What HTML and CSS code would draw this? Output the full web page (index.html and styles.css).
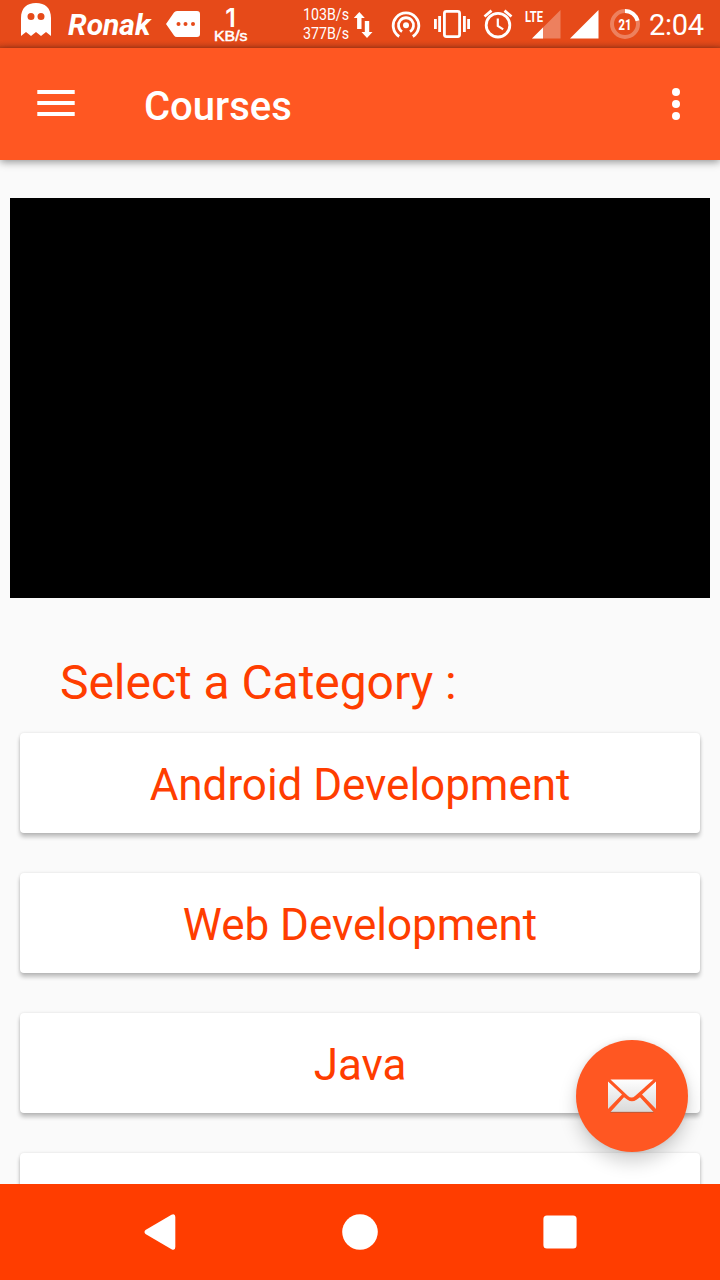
FILE: index.html
```html
<!DOCTYPE html>
<html lang="en">
<head>
<meta charset="utf-8">
<title>Courses</title>
<link rel="stylesheet" href="styles.css">
</head>
<body>
<div class="screen">
  <header class="status">
    <svg class="ghost" width="30" height="34" viewBox="0 0 30 34"><path fill="#fff" fill-rule="evenodd" d="M0 33V15C0 5 6 0 15 0s15 5 15 15v18l-5-4-5 4-5-4-5 4-5-4zM10 10a3.5 3.5 0 1 0 0 7 3.5 3.5 0 0 0 0-7zm10 0a3.500 3.500 0 1 0 0 7 3.500 3.500 0 0 0 0-7z"/></svg>
    <span class="carrier">Ronak</span>
    <svg class="tag" width="34" height="26" viewBox="0 0 34 26"><path fill="#fff" d="M11 0h20a3 3 0 0 1 3 3v20a3 3 0 0 1-3 3H11q-2 0-3-1.500L0 13l8-11.500Q9 0 11 0z"/><g fill="#e64a19"><circle cx="12.500" cy="13" r="2"/><circle cx="19.500" cy="13" r="2"/><circle cx="27" cy="13" r="2"/></g></svg>
    <svg class="speed" width="34" height="48" viewBox="0 0 34 48"><text class="speed-value" x="16.500" y="26.500" text-anchor="middle">1</text><text class="speed-unit" x="0" y="40.500" textLength="33.500" lengthAdjust="spacingAndGlyphs">KB/s</text></svg>
    <svg class="traffic" width="72" height="48" viewBox="0 0 72 48"><g fill="#fff" class="rates"><text x="0" y="20" textLength="46" lengthAdjust="spacingAndGlyphs">103B/s</text><text x="0" y="39" textLength="46" lengthAdjust="spacingAndGlyphs">377B/s</text></g><path fill="#fff" d="M56.300 12l5.500 6h-3.300v11h-4.400V18H50.800zM64 38l-5.500-6h3.300V21h4.400v11h3.300z"/></svg>
    <svg class="hotspot" width="30" height="48" viewBox="0 0 30 48"><g fill="none" stroke="#fff" stroke-width="2.800"><path d="M8.200 36.500a12.800 12.800 0 1 1 13.600 0"/><path d="M11 31.600a7.500 7.500 0 1 1 8 0"/></g><circle cx="15" cy="25.300" r="3" fill="#fff"/></svg>
    <svg class="vibrate" width="36" height="48" viewBox="0 0 36 48"><rect x="10.400" y="11.400" width="15.200" height="25.200" rx="2" fill="none" stroke="#fff" stroke-width="2.800"/><path fill="#fff" d="M0 19h2.800v10H0zM4.200 16h2.800v16H4.200zM29 16h2.800v16H29zM33.200 19H36v10h-2.800z"/></svg>
    <svg class="alarm" width="30" height="48" viewBox="0 0 30 48"><g fill="none" stroke="#fff" stroke-width="2.800"><circle cx="15" cy="25.200" r="11.800"/><path d="M1.500 16.500l7-5.800M28.500 16.500l-7-5.800"/><path d="M14.800 18.500v7.300l5.400 3.500" stroke-width="2.200"/></g></svg>
    <svg class="lte" width="36" height="48" viewBox="0 0 36 48"><path fill="#fff" fill-opacity=".3" d="M35.500 10v28.500H7z"/><path fill="#fff" d="M18 27.500v11H7z"/><path fill="#e64a19" d="M0 8h19v16H0z"/><text class="lte-label" x="0" y="22" textLength="18" lengthAdjust="spacingAndGlyphs">LTE</text></svg>
    <svg class="signal" width="29" height="48" viewBox="0 0 29 48"><path fill="#fff" d="M28.500 10v28.500H0z"/></svg>
    <svg class="battery" width="30" height="48" viewBox="0 0 30 48"><g fill="none" stroke="#fff" stroke-width="4"><circle cx="15" cy="24" r="13" stroke-opacity=".3"/><path d="M15 11a13 13 0 0 1 12.600 9.800"/></g><text class="battery-label" x="15" y="29.700" text-anchor="middle" textLength="13" lengthAdjust="spacingAndGlyphs">21</text></svg>
    <span class="clock">2:04</span>
  </header>
  <div class="toolbar">
    <svg width="38" height="26" viewBox="0 0 38 26"><path fill="#fff" d="M.3 0h37.400v4H.3zM.3 11h37.400v4H.3zM.3 22h37.400v4H.3z"/></svg>
    <h1 class="title">Courses</h1>
    <svg width="8" height="32" viewBox="0 0 8 32"><g fill="#fff"><circle cx="4" cy="4" r="4"/><circle cx="4" cy="16" r="4"/><circle cx="4" cy="28" r="4"/></g></svg>
  </div>
  <main class="content">
    <div class="video"></div>
    <h2 class="heading">Select a Category :</h2>
    <div class="list">
      <div class="card">Android Development</div>
      <div class="card">Web Development</div>
      <div class="card">Java</div>
      <div class="card"></div>
    </div>
    <div class="fab">
      <svg width="48" height="34" viewBox="0 0 48 34">
        <defs><linearGradient id="paper" x1="0" y1="0" x2="0" y2="34" gradientUnits="userSpaceOnUse"><stop offset="0" stop-color="#fff"/><stop offset="1" stop-color="#d8d8d8"/></linearGradient></defs>
        <g fill="url(#paper)"><path d="M2.500 .5h43L27 17q-3.500 3-7 0z"/><path d="M0 2.500l14 13L0 30zM48 2.500L34 15.500 48 30z"/><path d="M2.500 33L16 18.300l3.500 2.500q4.500 3 9 0l3.500-2.500L45.500 33z"/></g>
        <path d="M2.500 33.300h43" stroke="#a65a40" stroke-width=".8"/>
      </svg>
    </div>
  </main>
  <nav class="nav">
    <svg width="32" height="36" viewBox="0 0 32 36"><path fill="#fff" d="M1.500 16L27.500.7Q31.300-.8 31.300 3v30q0 4-3.800 2.300L1.500 20q-2-2 0-4z"/></svg>
    <svg width="36" height="36" viewBox="0 0 36 36"><circle cx="18" cy="18" r="17.800" fill="#fff"/></svg>
    <svg width="34" height="34" viewBox="0 0 34 34"><rect x=".4" y=".4" width="33.200" height="33.200" rx="3.500" fill="#fff"/></svg>
  </nav>
</div>
</body>
</html>
```
FILE: styles.css
```css
body { margin: 0; font-family: Roboto, "Noto Sans", sans-serif; }
svg { display: block; flex: none; }
.screen { width: 720px; height: 1280px; display: flex; flex-direction: column; overflow: hidden; background: #fafafa; }

.status { height: 48px; flex: none; display: flex; align-items: flex-start; color: #fff; background: linear-gradient(#e64a19 0 41px, #d94619 45px, #bf3e17 48px); white-space: nowrap; }
.ghost { margin: 3px 0 0 21px; }
.carrier { width: 84px; margin-left: 17px; font-size: 30px; line-height: 50px; font-weight: 700; font-style: italic; }
.tag { margin: 11px 0 0 14px; }
.speed { margin-left: 14px; fill: #fff; }
.speed-value { font-family: Inter, sans-serif; font-size: 25px; font-weight: 600; }
.speed-unit { font-family: "Liberation Sans", sans-serif; font-size: 14px; stroke: #fff; stroke-width: .5px; }
.traffic { margin-left: 55px; }
.rates { font-size: 16px; }
.hotspot { margin-left: 16px; }
.vibrate { margin-left: 13px; }
.alarm { margin-left: 13px; }
.lte { margin-left: 12px; }
.lte-label { font-size: 15px; font-weight: 700; fill: #fff; }
.signal { margin-left: 9px; }
.battery { margin-left: 11px; }
.battery-label { font-size: 14.500px; font-weight: 800; fill: #fff; }
.clock { margin-left: 9px; font-size: 29px; line-height: 51px; letter-spacing: -.3px; }

.toolbar { height: 112px; flex: none; box-sizing: border-box; padding: 0 40px 0 37px; display: flex; align-items: center; background: #ff5722; box-shadow: 0 2px 8px rgba(0, 0, 0, .42); z-index: 1; }
.toolbar svg { margin-bottom: 2px; }
.toolbar svg:last-child { margin-bottom: 0; }
.title { flex: 1; margin: 0 0 0 69px; padding-top: 6px; color: #fff; font-size: 40px; line-height: 48px; font-weight: 500; }

.content { position: relative; flex: 1; min-height: 0; overflow: hidden; padding: 38px 10px 0; color: #ff3d00; }
.video { height: 400px; background: #000; }
.heading { margin: 57px 0 22px 50px; font-size: 48px; line-height: 56px; font-weight: 400; letter-spacing: -.05px; }
.list { display: flex; flex-direction: column; gap: 40px; padding: 0 10px; }
.card { height: 100px; flex: none; box-sizing: border-box; padding-top: 4px; border-radius: 4px; background: #fff; box-shadow: 0 4px 4px rgba(0, 0, 0, .24), 0 0 3px rgba(0, 0, 0, .12); text-align: center; font-size: 44px; line-height: 96px; letter-spacing: -.03px; }
.fab { position: absolute; right: 32px; bottom: 32px; width: 112px; height: 112px; border-radius: 50%; display: flex; align-items: center; justify-content: center; background: #ff5722; box-shadow: 0 10px 18px rgba(0, 0, 0, .18), 0 0 6px rgba(0, 0, 0, .08); }

.nav { height: 96px; flex: none; box-sizing: border-box; padding: 0 143px 0 144px; display: flex; align-items: center; justify-content: space-between; background: #ff3d00; }
```
